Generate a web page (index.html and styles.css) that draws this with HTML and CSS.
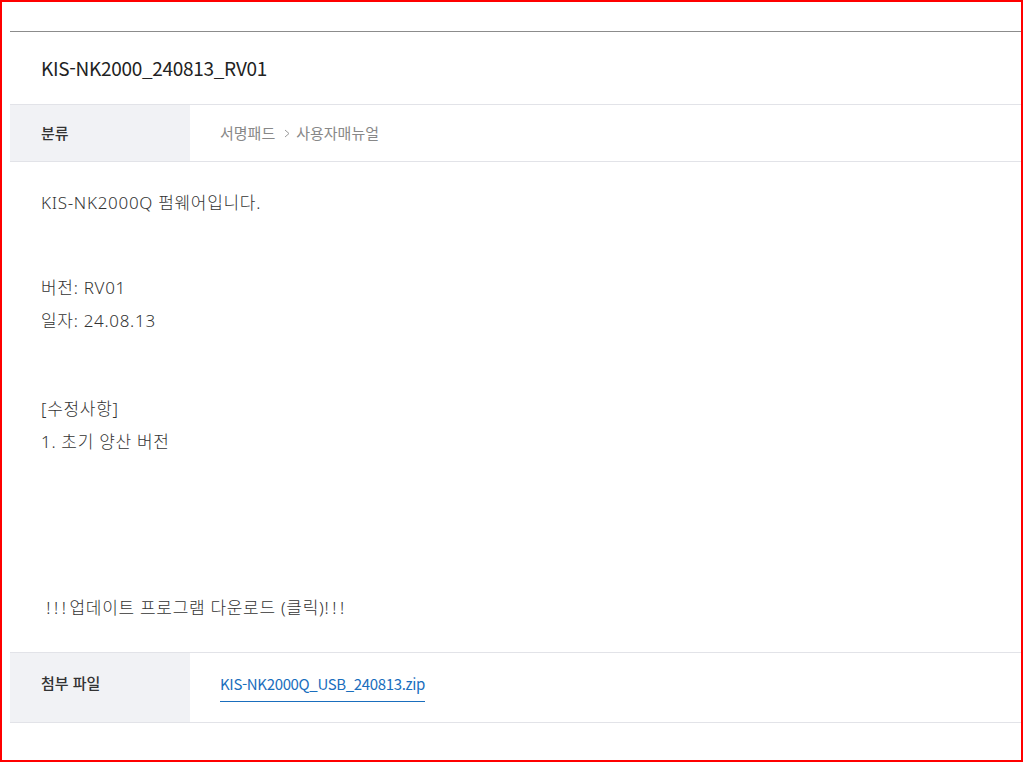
FILE: index.html
```html
<!DOCTYPE html>
<html lang="ko">
<head>
<meta charset="utf-8">
<title>KIS-NK2000_240813_RV01</title>
<link rel="stylesheet" href="styles.css">
</head>
<body>
<div class="frame">
  <div class="view">
    <h1 class="view-title">KIS-NK2000_240813_RV01</h1>
    <div class="info-row">
      <div class="info-label">분류</div>
      <div class="info-value">
        <span>서명패드</span>
        <svg class="crumb-sep" width="6" height="9" viewBox="0 0 6 9"><polyline points="1,1 5,4.5 1,8" fill="none" stroke="#9a9a9a" stroke-width="1"/></svg>
        <span>사용자매뉴얼</span>
      </div>
    </div>
    <div class="view-body">
      <p class="line">KIS-NK2000Q 펌웨어입니다.</p>
      <p class="line gap-a">버전: RV01</p>
      <p class="line">일자: 24.08.13</p>
      <p class="line gap-b">[수정사항]</p>
      <p class="line">1. 초기 양산 버전</p>
      <p class="line gap-c">&nbsp;<span class="bang">!!!</span>업데이트 프로그램 다운로드 (클릭)<span class="bang">!!!</span></p>
    </div>
    <div class="info-row file-row">
      <div class="info-label">첨부 파일</div>
      <div class="info-value">
        <a class="file-link" href="#">KIS-NK2000Q_USB_240813.zip</a>
      </div>
    </div>
  </div>
</div>
</body>
</html>
```

FILE: styles.css
```css
html, body {
  margin: 0;
  padding: 0;
  background: #fff;
}

body {
  font-family: "Noto Sans CJK KR", "Noto Sans", sans-serif;
  color: #333;
}

.frame {
  box-sizing: border-box;
  width: 1023px;
  height: 762px;
  border: 2px solid #ff0000;
  padding: 29px 0 0 8px;
  overflow: hidden;
}

.view {
  border-top: 1px solid #8c8c8c;
  width: 1040px;
}

.view-title {
  margin: 0;
  padding: 22px 31px;
  font-size: 19px;
  line-height: 28px;
  font-weight: 400;
  color: #222;
  letter-spacing: -0.3px;
}

.info-row {
  display: flex;
  border-top: 1px solid #e2e3e8;
  border-bottom: 1px solid #e2e3e8;
}

.info-label {
  flex: 0 0 180px;
  box-sizing: border-box;
  background: #f1f2f5;
  padding: 16px 0 16px 31px;
  font-size: 15px;
  line-height: 24px;
  font-weight: 500;
  color: #333;
}

.info-value {
  display: flex;
  align-items: center;
  align-self: flex-start;
  padding: 16px 0 16px 30px;
  font-size: 15px;
  line-height: 24px;
  color: #888;
}

.crumb-sep {
  margin: 0 6px 0 9px;
}

.view-body {
  padding: 25px 31px 28px;
  font-family: "Noto Sans", "Noto Sans CJK KR", sans-serif;
  font-size: 17px;
  line-height: 32.4px;
  font-weight: 300;
  letter-spacing: 0.7px;
  color: #333;
}

.line {
  margin: 0;
}

.bang {
  letter-spacing: 3.6px;
}

.gap-a {
  margin-top: 53px;
}

.gap-b {
  margin-top: 56px;
}

.gap-c {
  margin-top: 134px;
}

.file-row {
  border-top: 1px solid #e2e3e8;
}

.file-row .info-label {
  padding-top: 18px;
}

.file-row .info-value {
  padding: 19px 0 20px 30px;
}

.file-link {
  display: inline-block;
  color: #1a6ebd;
  text-decoration: none;
  padding-bottom: 5px;
  border-bottom: 1px solid #1a6ebd;
  letter-spacing: -0.35px;
}
```
